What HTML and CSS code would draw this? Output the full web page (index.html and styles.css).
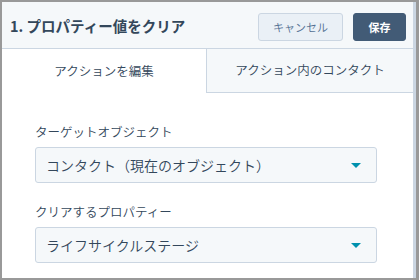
FILE: index.html
```html
<!DOCTYPE html>
<html lang="ja">
<head>
    <meta charset="UTF-8">
    <meta name="viewport" content="width=device-width, initial-scale=1.0">
    <title>プロパティー値をクリア</title>
    <link rel="stylesheet" href="styles.css">
</head>
<body>

    <div class="panel">
        <div class="panel-header">
            <h1 class="title">1. プロパティー値をクリア</h1>
            <div class="actions">
                <button class="btn btn-cancel">キャンセル</button>
                <button class="btn btn-save">保存</button>
            </div>
        </div>

        <div class="tabs">
            <div class="tab active">アクションを編集</div>
            <div class="tab">アクション内のコンタクト</div>
        </div>

        <div class="form">
            <div class="field">
                <label class="label">ターゲットオブジェクト</label>
                <div class="select">
                    <span>コンタクト（現在のオブジェクト）</span>
                    <span class="caret"></span>
                </div>
            </div>
            <div class="field">
                <label class="label">クリアするプロパティー</label>
                <div class="select">
                    <span>ライフサイクルステージ</span>
                    <span class="caret"></span>
                </div>
            </div>
        </div>
    </div>

</body>
</html>
```

FILE: styles.css
```css
html, body {
    margin: 0;
    height: 100%;
}

body {
    background-color: #999999;
    padding: 2px 3px 2px 2px;
    box-sizing: border-box;
    font-family: "Noto Sans CJK JP", "Noto Sans", sans-serif;
    font-weight: 350;
    color: #33475b;
}

.panel {
    height: 100%;
    background-color: #fff;
    border-right: 3px solid #cbd6e2;
    box-sizing: border-box;
    display: flex;
    flex-direction: column;
}

.panel-header {
    height: 46px;
    background-color: #f5f8fa;
    border-bottom: 1px solid #cbd6e2;
    display: flex;
    align-items: center;
    justify-content: space-between;
    padding: 0 7px 0 8px;
}

.title {
    margin: 0;
    font-size: 14.5px;
    font-weight: bold;
    color: #33475b;
}

.actions {
    display: flex;
    gap: 10px;
    padding-top: 4px;
}

.btn {
    height: 28px;
    border-radius: 3px;
    font-family: inherit;
    font-size: 11px;
    padding: 0;
    cursor: pointer;
}

.btn-cancel {
    width: 85px;
    background-color: #eaf0f6;
    border: 1px solid #cbd6e2;
    color: #506e91;
    font-weight: 350;
}

.btn-save {
    width: 53px;
    background-color: #425b76;
    border: 1px solid #425b76;
    color: #fff;
    font-weight: bold;
}

.tabs {
    display: flex;
    height: 44px;
}

.tab {
    flex: 1;
    display: flex;
    align-items: center;
    justify-content: center;
    padding-bottom: 2px;
    font-size: 12.5px;
    background-color: #f5f8fa;
    border-left: 1px solid #cbd6e2;
    border-bottom: 1px solid #cbd6e2;
}

.tab.active {
    flex: 0 0 204px;
    background-color: #fff;
    border: none;
}

.form {
    padding: 30px 36px 0 33px;
    display: flex;
    flex-direction: column;
    gap: 20px;
}

.field {
    display: flex;
    flex-direction: column;
    gap: 6px;
}

.label {
    font-size: 12.5px;
    line-height: 18px;
}

.select {
    height: 36px;
    box-sizing: border-box;
    background-color: #f5f8fa;
    border: 1px solid #cbd6e2;
    border-radius: 3px;
    display: flex;
    align-items: center;
    justify-content: space-between;
    padding: 0 15px 0 10px;
    font-size: 14px;
}

.caret {
    width: 0;
    height: 0;
    border-left: 5px solid transparent;
    border-right: 5px solid transparent;
    border-top: 5px solid #0091ae;
}
```
